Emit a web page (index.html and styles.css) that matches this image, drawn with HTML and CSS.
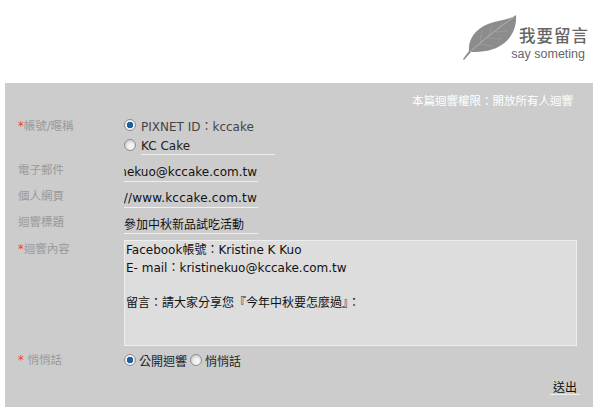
FILE: index.html
```html
<!DOCTYPE html>
<html lang="zh-Hant">
<head>
  <meta charset="UTF-8">
  <title>我要留言</title>
  <link rel="stylesheet" href="styles.css">
</head>
<body>

<header class="top">
  <svg class="leaf" width="56" height="46" viewBox="0 0 56 46">
    <path d="M1 45 L7 37 C6 26 13 15 26 10 C37 6 47 6 54 1 C55 12 50 24 41 30 C32 37 20 38 9 38 L2 46 Z" fill="#8c8c8c"/>
    <path d="M8 38 C20 27 34 16 52 3" fill="none" stroke="#b5b5b5" stroke-width="1"/>
    <path d="M18 29 L20 17 M26 23 L30 12 M34 17 L40 9 M18 30 L30 32 M26 24 L40 25 M34 18 L46 17" fill="none" stroke="#a2a2a2" stroke-width="0.7"/>
  </svg>
  <div class="brand">
    <div class="brand-zh">我要留言</div>
    <div class="brand-en">say someting</div>
  </div>
</header>

<form class="panel">
  <p class="notice">本篇迴響權限：開放所有人迴響</p>

  <div class="row row-id">
    <div class="label"><span class="req">*</span>帳號/暱稱</div>
    <div class="field">
      <label class="choice muted"><input type="radio" name="who" checked> PIXNET ID：kccake</label>
      <label class="choice"><input type="radio" name="who"> <span class="underlined">KC Cake</span></label>
    </div>
  </div>

  <div class="row row-line">
    <div class="label">電子郵件</div>
    <div class="line line-end"><span>kristinekuo@kccake.com.tw</span></div>
  </div>
  <div class="row row-line">
    <div class="label">個人網頁</div>
    <div class="line line-end line-url"><span>http://www.kccake.com.tw</span></div>
  </div>
  <div class="row row-line">
    <div class="label">迴響標題</div>
    <div class="line"><span>參加中秋新品試吃活動</span></div>
  </div>

  <div class="row row-body">
    <div class="label"><span class="req">*</span>迴響內容</div>
    <div class="textbox">Facebook帳號：Kristine K Kuo
E- mail：kristinekuo@kccake.com.tw

留言：請大家分享您『今年中秋要怎麼過』：</div>
  </div>

  <div class="row row-secret">
    <div class="label"><span class="req">*</span> 悄悄話</div>
    <div class="field-inline">
      <label class="choice"><input type="radio" name="vis" checked> 公開迴響</label>
      <label class="choice"><input type="radio" name="vis"> 悄悄話</label>
    </div>
  </div>

  <div class="actions"><button type="button" class="send">送出</button></div>
</form>

</body>
</html>
```

FILE: styles.css
```css
body {
  margin: 0;
  background-color: #fff;
  font-family: "DejaVu Sans", "Noto Sans CJK TC", sans-serif;
  font-size: 12px;
  color: #222;
}
.top {
  height: 83px;
  display: flex;
  justify-content: flex-end;
  align-items: flex-start;
  padding-right: 12px;
  box-sizing: border-box;
}
.leaf {
  margin-top: 14px;
  margin-right: -7px;
}
.brand {
  margin-top: 24px;
  color: #666;
  text-align: right;
}
.brand-zh {
  font-size: 16.5px;
  font-weight: 500;
  line-height: 23px;
  letter-spacing: 1px;
  margin-right: -1px;
  font-family: "Noto Sans CJK TC", sans-serif;
}
.brand-en {
  font-family: "Liberation Sans", sans-serif;
  font-size: 12.5px;
  line-height: 14px;
  margin-right: 3px;
}
.panel {
  width: 588px;
  height: 324px;
  margin-left: 5px;
  background-color: #ccc;
  box-sizing: border-box;
  padding: 11px 16px 0 13px;
}
.notice {
  margin: 0 0 7px;
  text-align: right;
  color: #fff;
  font-size: 11.5px;
  line-height: 14px;
  padding-right: 4px;
}
.row {
  display: flex;
}
.label {
  width: 106px;
  color: #999;
  font-size: 11.5px;
  line-height: 18px;
  flex: none;
  position: relative;
  top: 2px;
}
.req {
  color: #f33;
}
.row-id {
  height: 38px;
}
.choice {
  display: flex;
  align-items: center;
  gap: 5px;
  height: 20px;
}
.muted {
  color: #444;
}
.underlined {
  border-bottom: 1px solid #eee;
  width: 134px;
  line-height: 15px;
  padding-top: 2px;
  margin-top: 1px;
}
input[type="radio"] {
  appearance: none;
  width: 12px;
  height: 12px;
  margin: 0;
  flex: none;
  border-radius: 50%;
  border: 1px solid #8f8f8f;
  background: radial-gradient(circle at 60% 65%, #f4f4f4 25%, #bdbdbd 100%);
}
input[type="radio"]:checked {
  background: radial-gradient(circle, #1f5f9e 0 3px, #eee 3.5px);
}
.row-line {
  height: 26px;
}
.row-line .label {
  line-height: 20px;
  top: 0;
}
.row-id + .row-line {
  margin-top: 7px;
}
.line {
  width: 134px;
  display: flex;
  align-items: center;
  overflow: hidden;
  border-bottom: 1px solid #eee;
  white-space: nowrap;
  color: #111;
  padding-top: 2px;
  box-sizing: border-box;
  height: 22px;
}
.line span {
  flex: none;
}
.line-end {
  justify-content: flex-end;
  padding-right: 1px;
}
.line-url {
  letter-spacing: 0.2px;
}
.row-body {
  height: 106px;
  margin-top: 2px;
}
.row-body .label {
  top: 0;
}
.textbox {
  width: 454px;
  height: 106px;
  box-sizing: border-box;
  background-color: #ddd;
  border: 1px solid #eee;
  padding: 1px;
  line-height: 17.5px;
  white-space: pre-wrap;
  color: #111;
}
.row-secret {
  margin-top: 4px;
  height: 20px;
}
.row-secret .label {
  line-height: 20px;
  top: 0;
}
.field-inline {
  display: flex;
  gap: 3px;
}
.field-inline .choice {
  gap: 3px;
}
.actions {
  display: flex;
  justify-content: flex-end;
  margin-top: 8px;
  margin-right: -3px;
}
.send {
  background: none;
  border: 0;
  border-bottom: 1px solid #eee;
  padding: 0 3px;
  height: 17px;
  font: 12px/15px "Noto Sans CJK TC", sans-serif;
  color: #111;
}
```
